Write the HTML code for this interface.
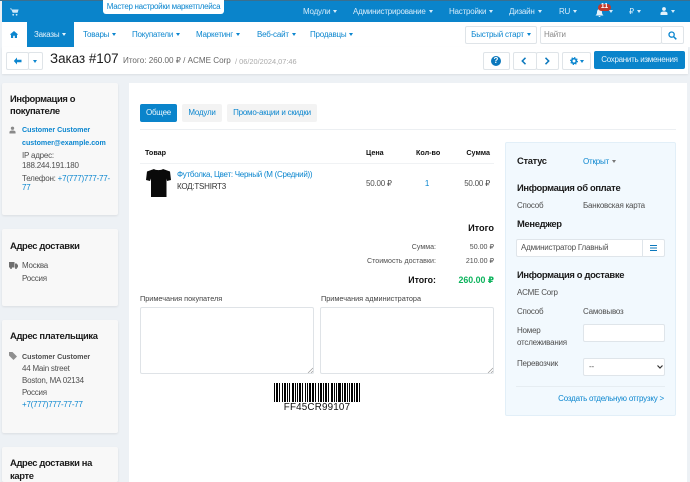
<!DOCTYPE html>
<html lang="ru">
<head>
<meta charset="utf-8">
<title>Заказ #107</title>
<style>
html,body{margin:0;padding:0;overflow:hidden}
body{width:690px;height:482px;position:relative;background:#edf1f5;font-family:"Liberation Sans","DejaVu Sans",sans-serif;font-size:8px;color:#4f4f4f}
.a{position:absolute}
.t{position:absolute;white-space:nowrap;line-height:12px;letter-spacing:-.22px}
.n{letter-spacing:0}
.r{text-align:right}
.c{text-align:center}
.w{color:#d6ecfa}
.b{color:#0b86cf}
.k{color:#111}
.h{font-weight:bold;font-size:9.400px;color:#1a1a1a;letter-spacing:-.33px}
.card{position:absolute;left:2px;width:116px;background:#f8f8f8;border-radius:2px;box-shadow:0 1px 2px rgba(0,0,0,.08)}
.btn{position:absolute;background:#fff;border:1px solid #dfe4e8;border-radius:2px;box-sizing:border-box}
.car{display:inline-block;width:0;height:0;border-left:2.5px solid transparent;border-right:2.5px solid transparent;border-top:3px solid currentColor;vertical-align:middle;margin-left:3px}
.inp{position:absolute;background:#fff;border:1px solid #dfe5ea;border-radius:2px;box-sizing:border-box}
</style>
</head>
<body>
<!-- top bar -->
<div class="a" style="left:2px;top:0;width:688px;height:22px;background:#0a84cb"></div>
<div class="a" style="left:0;top:0;width:690px;height:1px;background:#3a6f8f"></div>
<svg class="a" style="left:10px;top:8px" width="9" height="8" viewBox="0 0 9 8"><path d="M0 .5h1.600l.4 1h6.600l-1 3.300H2.700L1.200 1.300H0z" fill="#cfe8f8"/><circle cx="3.200" cy="6.800" r=".9" fill="#cfe8f8"/><circle cx="6.600" cy="6.800" r=".9" fill="#cfe8f8"/></svg>
<div class="a" style="left:103px;top:0;width:121px;height:14px;background:#fff;border-radius:0 0 3px 3px"></div>
<div class="t b c" style="left:103px;top:1px;width:121px;letter-spacing:-.3px">Мастер настройки маркетплейса</div>
<div class="t w" style="left:303px;top:6px">Модули<span class="car"></span></div>
<div class="t w" style="left:353px;top:6px">Администрирование<span class="car"></span></div>
<div class="t w" style="left:449px;top:6px">Настройки<span class="car"></span></div>
<div class="t w" style="left:509px;top:6px">Дизайн<span class="car"></span></div>
<div class="t w" style="left:559px;top:6px">RU<span class="car"></span></div>
<svg class="a" style="left:595px;top:9px" width="9" height="8" viewBox="0 0 9 8"><path d="M4.500 0C6.500 0 7 2 7 3.500S8 6 8.500 6.500h-8C1 6 2 5 2 3.500S2.500 0 4.500 0zM3.500 7h2a1 1 0 0 1-2 0z" fill="#e4f2fb"/></svg>
<div class="a" style="left:598px;top:4px;width:13px;height:7px;background:#c0392b;border-radius:4px"></div>
<div class="t c n" style="left:598px;top:2px;width:13px;color:#fff;font-size:7px;font-weight:bold;line-height:10px">11</div>
<span class="car a" style="left:609px;top:10px;margin:0;color:#d6ecfa"></span>
<div class="t w" style="left:629px;top:6px">₽<span class="car"></span></div>
<svg class="a" style="left:660px;top:7px" width="8" height="8" viewBox="0 0 8 8"><circle cx="4" cy="2" r="1.900" fill="#e4f2fb"/><path d="M.5 8V6.500C.5 5 2 4.500 4 4.500S7.500 5 7.500 6.500V8z" fill="#e4f2fb"/></svg>
<span class="car a" style="left:671px;top:10px;margin:0;color:#d6ecfa"></span>

<!-- second nav -->
<div class="a" style="left:2px;top:22px;width:688px;height:25px;background:#fff"></div>
<div class="a" style="left:27px;top:22px;width:47px;height:25px;background:#0a84cb"></div>
<svg class="a" style="left:10px;top:31px" width="8" height="7" viewBox="0 0 8 7"><path d="M4 0L0 3.400l.5.500L1 3.500V7h2.200V4.800h1.600V7H7V3.500l.5.400.5-.500z" fill="#0b86cf"/></svg>
<div class="t" style="left:34px;top:29px;color:#e6f3fb">Заказы<span class="car"></span></div>
<div class="t b" style="left:83px;top:29px">Товары<span class="car"></span></div>
<div class="t b" style="left:132px;top:29px">Покупатели<span class="car"></span></div>
<div class="t b" style="left:196px;top:29px">Маркетинг<span class="car"></span></div>
<div class="t b" style="left:257px;top:29px">Веб-сайт<span class="car"></span></div>
<div class="t b" style="left:310px;top:29px">Продавцы<span class="car"></span></div>
<div class="btn" style="left:465px;top:26px;width:72px;height:18px"></div>
<div class="t b c" style="left:465px;top:29px;width:72px">Быстрый старт<span class="car"></span></div>
<div class="btn" style="left:540px;top:26px;width:122px;height:18px"></div>
<div class="btn" style="left:661px;top:26px;width:23px;height:18px"></div>
<div class="t" style="left:544px;top:29px;color:#8a8a8a">Найти</div>
<svg class="a" style="left:668px;top:31px" width="9" height="9" viewBox="0 0 9 9"><circle cx="3.600" cy="3.600" r="2.600" fill="none" stroke="#0b86cf" stroke-width="1.300"/><path d="M5.600 5.600L8.300 8.300" stroke="#0b86cf" stroke-width="1.500"/></svg>

<!-- title bar -->
<div class="a" style="left:2px;top:47px;width:686px;height:27px;background:#fff;box-shadow:0 1px 2px rgba(0,0,0,.08)"></div>
<div class="btn" style="left:6px;top:52px;width:23px;height:18px"></div>
<div class="btn" style="left:28px;top:52px;width:15px;height:18px"></div>
<svg class="a" style="left:13px;top:57px" width="9" height="8" viewBox="0 0 9 8"><path d="M4 .5L.8 4 4 7.500V5.300h4.500V2.700H4z" fill="#0b86cf"/></svg>
<span class="car a b" style="left:33px;top:60px;margin:0"></span>
<div class="t n" style="left:50px;top:50px;font-size:13.400px;line-height:18px;color:#1a1a1a">Заказ #107</div>
<div class="t n" style="left:123px;top:55px;font-size:8.100px;color:#666">Итого: 260.00 ₽ / ACME Corp</div>
<div class="t n" style="left:235px;top:56px;font-size:7.400px;color:#aaa">/ 06/20/2024,07:46</div>
<div class="btn" style="left:483px;top:52px;width:27px;height:18px"></div>
<div class="a" style="left:491px;top:56px;width:10px;height:10px;background:#0b78bd;border-radius:50%;color:#fff;font-size:8px;font-weight:bold;line-height:10px;text-align:center">?</div>
<div class="btn" style="left:513px;top:52px;width:24px;height:18px"></div>
<div class="btn" style="left:536px;top:52px;width:23px;height:18px"></div>
<svg class="a" style="left:521px;top:57px" width="6" height="8" viewBox="0 0 6 8"><path d="M4.500 .8L1.300 4l3.200 3.200" fill="none" stroke="#0b78bd" stroke-width="1.500"/></svg>
<svg class="a" style="left:544px;top:57px" width="6" height="8" viewBox="0 0 6 8"><path d="M1.500 .8L4.700 4 1.500 7.200" fill="none" stroke="#0b78bd" stroke-width="1.500"/></svg>
<div class="btn" style="left:562px;top:52px;width:29px;height:18px"></div>
<svg class="a" style="left:570px;top:57px" width="8" height="8" viewBox="0 0 8 8"><circle cx="4" cy="4" r="2.300" fill="none" stroke="#0b86cf" stroke-width="1.700"/><circle cx="4" cy="4" r="3.500" fill="none" stroke="#0b86cf" stroke-width="1" stroke-dasharray="1.300 1.450"/></svg>
<span class="car a b" style="left:580px;top:60px;margin:0"></span>
<div class="a" style="left:594px;top:51px;width:91px;height:18px;background:#0a84cb;border-radius:2px"></div>
<div class="t c" style="left:594px;top:54px;width:91px;color:#e6f3fb;letter-spacing:-.3px">Сохранить изменения</div>

<!-- left cards -->
<div class="card" style="top:83px;height:132px"></div>
<div class="t h" style="left:10px;top:93px">Информация о</div>
<div class="t h" style="left:10px;top:105px">покупателе</div>
<svg class="a" style="left:9px;top:126px" width="7" height="8" viewBox="0 0 8 8"><circle cx="4" cy="2" r="1.900" fill="#8a8a8a"/><path d="M.5 8V6.500C.5 5 2 4.500 4 4.500S7.500 5 7.500 6.500V8z" fill="#8a8a8a"/></svg>
<div class="t b n" style="left:22px;top:124px;font-weight:bold;font-size:7.100px">Customer Customer</div>
<div class="t b n" style="left:22px;top:137px;font-weight:bold;font-size:7.100px">customer@example.com</div>
<div class="t" style="left:22px;top:150px">IP адрес:</div>
<div class="t" style="left:22px;top:160px">188.244.191.180</div>
<div class="t" style="left:22px;top:173px">Телефон: <span class="b">+7(777)777-77-</span></div>
<div class="t b" style="left:22px;top:182px">77</div>

<div class="card" style="top:229px;height:77px"></div>
<div class="t h" style="left:10px;top:240px">Адрес доставки</div>
<svg class="a" style="left:9px;top:262px" width="9" height="7" viewBox="0 0 9 7"><path d="M0 0h5.500v5.500H0zM6 1.500h1.700L9 3.200v2.300H6z" fill="#6f6f6f"/><circle cx="2" cy="6" r="1" fill="#6f6f6f"/><circle cx="7" cy="6" r="1" fill="#6f6f6f"/></svg>
<div class="t" style="left:22px;top:260px">Москва</div>
<div class="t" style="left:22px;top:273px">Россия</div>

<div class="card" style="top:320px;height:113px"></div>
<div class="t h" style="left:10px;top:330px">Адрес плательщика</div>
<svg class="a" style="left:9px;top:352px" width="8" height="8" viewBox="0 0 8 8"><path d="M0 0h3.500L8 4.500 4.500 8 0 3.500z" fill="#8f8f8f"/></svg>
<div class="t n" style="left:22px;top:351px;font-weight:bold;font-size:7.100px">Customer Customer</div>
<div class="t" style="left:22px;top:363px">44 Main street</div>
<div class="t" style="left:22px;top:375px">Boston, MA 02134</div>
<div class="t" style="left:22px;top:387px">Россия</div>
<div class="t b" style="left:22px;top:399px">+7(777)777-77-77</div>

<div class="card" style="top:447px;height:35px"></div>
<div class="t h" style="left:10px;top:457px">Адрес доставки на</div>
<div class="t h" style="left:10px;top:470px">карте</div>

<!-- main panel -->
<div class="a" style="left:129px;top:83px;width:558px;height:399px;background:#fff"></div>
<div class="a" style="left:140px;top:104px;width:37px;height:18px;background:#0a84cb;border-radius:2px"></div>
<div class="t c" style="left:140px;top:107px;width:37px;color:#e9f5fc">Общее</div>
<div class="a" style="left:182px;top:104px;width:40px;height:18px;background:#f3f3f3;border-radius:2px"></div>
<div class="t b c" style="left:182px;top:107px;width:40px">Модули</div>
<div class="a" style="left:227px;top:104px;width:90px;height:18px;background:#f3f3f3;border-radius:2px"></div>
<div class="t b c" style="left:227px;top:107px;width:90px">Промо-акции и скидки</div>
<div class="a" style="left:140px;top:129px;width:536px;height:1px;background:#eceff2"></div>

<!-- table -->
<div class="t k n" style="left:145px;top:147px;font-weight:bold;font-size:7.200px">Товар</div>
<div class="t k n" style="left:366px;top:147px;font-weight:bold;font-size:7.200px">Цена</div>
<div class="t k n" style="left:416px;top:147px;font-weight:bold;font-size:7.200px">Кол-во</div>
<div class="t k r n" style="left:450px;top:147px;width:40px;font-weight:bold;font-size:7.200px">Сумма</div>
<div class="a" style="left:140px;top:163px;width:354px;height:1px;background:#f0f2f4"></div>
<svg class="a" style="left:146px;top:169px" width="25" height="28" viewBox="0 0 25 28"><path d="M8 0L1 2.500 0 11l4 1 1-2.500V28H20.500V9.500L21 12l4-1-1-8.500L17 0C15.500 1.500 9.500 1.500 8 0z" fill="#0a0a0a"/></svg>
<div class="t b" style="left:177px;top:169px;letter-spacing:-.28px">Футболка, Цвет: Черный (M (Средний))</div>
<div class="t" style="left:177px;top:181px;color:#333">КОД:TSHIRT3</div>
<div class="t" style="left:366px;top:178px">50.00 ₽</div>
<div class="t b c" style="left:417px;top:178px;width:20px">1</div>
<div class="t r" style="left:450px;top:178px;width:40px">50.00 ₽</div>

<div class="t k r n" style="left:420px;top:222px;width:74px;font-weight:bold;font-size:9.200px">Итого</div>
<div class="t r n" style="left:380px;top:241px;width:56px;font-size:7.100px">Сумма:</div>
<div class="t r n" style="left:450px;top:241px;width:44px;font-size:7.100px">50.00 ₽</div>
<div class="t r n" style="left:340px;top:255px;width:96px;font-size:7.100px">Стоимость доставки:</div>
<div class="t r n" style="left:450px;top:255px;width:44px;font-size:7.100px">210.00 ₽</div>
<div class="t k r n" style="left:380px;top:274px;width:56px;font-weight:bold;font-size:8.800px">Итого:</div>
<div class="t r n" style="left:440px;top:274px;width:54px;font-weight:bold;font-size:8.800px;color:#0cb35c">260.00 ₽</div>

<div class="t n" style="left:140px;top:293px;color:#444;font-size:7.300px">Примечания покупателя</div>
<div class="t n" style="left:321px;top:293px;color:#444;font-size:7.300px">Примечания администратора</div>
<div class="a" style="left:140px;top:307px;width:174px;height:67px;box-sizing:border-box;border:1px solid #dfe3e7;border-radius:2px"></div>
<div class="a" style="left:320px;top:307px;width:174px;height:67px;box-sizing:border-box;border:1px solid #dfe3e7;border-radius:2px"></div>
<svg class="a" style="left:307px;top:367px" width="6" height="6"><path d="M1 6L6 1M4 6L6 4" stroke="#999" stroke-width=".7"/></svg>
<svg class="a" style="left:487px;top:367px" width="6" height="6"><path d="M1 6L6 1M4 6L6 4" stroke="#999" stroke-width=".7"/></svg>

<!-- barcode -->
<svg class="a" style="left:273px;top:383px" width="88" height="19" viewBox="0 0 88 19" shape-rendering="crispEdges" fill="#000"><path d="M1 0h1v19H1zM3 0h2v19H3zM6 0h1v19H6zM9 0h1v19H9zM11 0h2v19h-2zM14 0h1v19h-1zM16 0h1v19h-1zM19 0h2v19h-2zM22 0h1v19h-1zM24 0h1v19h-1zM26 0h2v19h-2zM29 0h1v19h-1zM32 0h1v19h-1zM34 0h1v19h-1zM36 0h2v19h-2zM39 0h2v19h-2zM42 0h1v19h-1zM45 0h1v19h-1zM47 0h2v19h-2zM50 0h1v19h-1zM52 0h2v19h-2zM55 0h1v19h-1zM58 0h2v19h-2zM61 0h1v19h-1zM63 0h1v19h-1zM65 0h3v19h-3zM69 0h1v19h-1zM71 0h2v19h-2zM74 0h1v19h-1zM76 0h1v19h-1zM78 0h2v19h-2zM81 0h1v19h-1zM83 0h2v19h-2zM86 0h1v19h-1z"/></svg>
<div class="t c k" style="left:273px;top:402px;width:88px;font-size:9.800px;letter-spacing:.2px">FF45CR99107</div>

<!-- right panel -->
<div class="a" style="left:505px;top:142px;width:171px;height:274px;box-sizing:border-box;background:#f2f9fe;border:1px solid #e2eff8;border-radius:2px"></div>
<div class="t h" style="left:517px;top:155px">Статус</div>
<div class="t b" style="left:583px;top:156px">Открыт<span class="car" style="color:#777"></span></div>
<div class="t h" style="left:517px;top:182px">Информация об оплате</div>
<div class="t" style="left:517px;top:200px">Способ</div>
<div class="t" style="left:583px;top:200px">Банковская карта</div>
<div class="t h" style="left:517px;top:218px">Менеджер</div>
<div class="inp" style="left:516px;top:239px;width:149px;height:18px"></div>
<div class="a" style="left:642px;top:239px;width:1px;height:18px;background:#dfe5ea"></div>
<div class="t" style="left:521px;top:242px">Администратор Главный</div>
<svg class="a" style="left:650px;top:245px" width="7" height="6"><path d="M0 .5h7M0 3h7M0 5.500h7" stroke="#0b78bd" stroke-width="1"/></svg>
<div class="t h" style="left:517px;top:269px">Информация о доставке</div>
<div class="t" style="left:517px;top:287px">ACME Corp</div>
<div class="t" style="left:517px;top:306px">Способ</div>
<div class="t" style="left:583px;top:306px">Самовывоз</div>
<div class="t" style="left:517px;top:325px">Номер</div>
<div class="t" style="left:517px;top:337px">отслеживания</div>
<div class="inp" style="left:583px;top:324px;width:82px;height:18px"></div>
<div class="t" style="left:517px;top:358px">Перевозчик</div>
<div class="inp" style="left:583px;top:358px;width:82px;height:18px"></div>
<div class="t" style="left:589px;top:361px">--</div>
<svg class="a" style="left:657px;top:365px" width="6" height="4"><path d="M.5.500L3 3 5.500.500" fill="none" stroke="#333" stroke-width="1.200"/></svg>
<div class="a" style="left:516px;top:386px;width:149px;height:1px;background:#e6edf2"></div>
<div class="t b r" style="left:540px;top:393px;width:124px">Создать отдельную отгрузку &gt;</div>
</body>
</html>
